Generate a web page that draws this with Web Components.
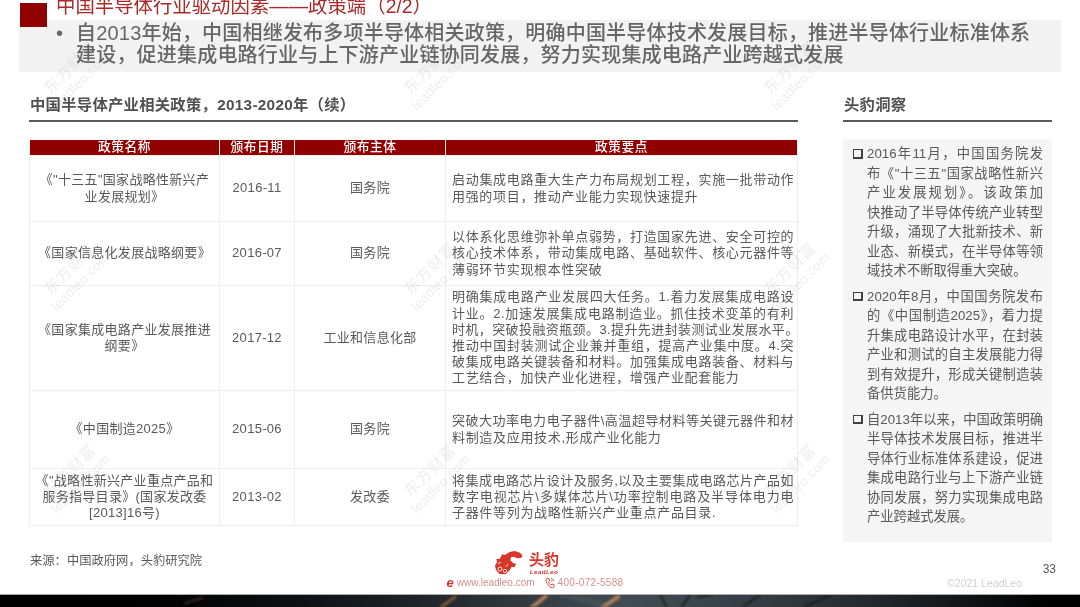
<!DOCTYPE html>
<html lang="zh"><head><meta charset="utf-8">
<style>
html,body{margin:0;padding:0;background:#fff;width:1080px;height:607px;overflow:hidden;font-family:"Liberation Sans","Noto Sans CJK SC",sans-serif}
</style></head><body>
<lead-slide>
  <lead-header slot="header" title="中国半导体行业驱动因素——政策端（2/2）">
    <div>自2013年始，中国相继发布多项半导体相关政策，明确中国半导体技术发展目标，推进半导体行业标准体系</div>
    <div>建设，促进集成电路行业与上下游产业链协同发展，努力实现集成电路产业跨越式发展</div>
  </lead-header>
  <lead-section slot="left" heading="中国半导体产业相关政策，2013-2020年（续）" style="width:769px"><policy-table></policy-table></lead-section>
  <lead-section slot="right" heading="头豹洞察" style="width:209px"><insight-panel></insight-panel></lead-section>
  <lead-footer slot="footer"></lead-footer>
</lead-slide>
<script>
const FONT='"Liberation Sans","Noto Sans CJK SC",sans-serif';
function shadow(el,html){el.attachShadow({mode:'open'}).innerHTML=html;}

customElements.define('lead-mark',class extends HTMLElement{connectedCallback(){
 shadow(this,`<style>:host{display:block;position:absolute;width:70px;height:60px;pointer-events:none;z-index:3}
 div{position:absolute;transform-origin:left bottom;transform:rotate(-45deg);white-space:nowrap;color:#000;opacity:.075}
 .a{left:9px;top:36px;font:15.5px/15px ${FONT};letter-spacing:1px}.b{left:16px;top:53px;font:13.5px/15px ${FONT};letter-spacing:.3px}</style>
 <div class="a">东方财富</div><div class="b">leadleo.com</div>`);
}});

customElements.define('lead-slide',class extends HTMLElement{connectedCallback(){
 const marks=[[43,95],[403,95],[763,95],[43,296],[403,296],[763,296],[43,498],[403,498],[763,498]];
 shadow(this,`<style>
 :host{display:flex;flex-direction:column;width:1080px;height:607px;position:relative;overflow:hidden;filter:blur(.4px)}
 .main{display:flex;gap:45px;padding:16px 0 0 29px;align-items:flex-start}
 </style>
 <slot name="header"></slot>
 <div class="main"><slot name="left"></slot><slot name="right"></slot></div>
 <slot name="footer"></slot>
 ${marks.map(m=>`<lead-mark style="left:${m[0]}px;top:${m[1]-50}px"></lead-mark>`).join('')}`);
}});

customElements.define('lead-header',class extends HTMLElement{connectedCallback(){
 shadow(this,`<style>
 :host{display:grid;grid-template-columns:19px 1px 27px 9px 1fr 19px;grid-template-rows:3px 17px 52px;height:72px;flex:none;color:#666}
 .band{grid-column:2/6;grid-row:3;background:#f2f2f2}
 .sq{grid-column:3;grid-row:2/4;height:24px;background:#900000;z-index:1}
 h1{grid-column:5;grid-row:1/3;margin:-6px 0 0;font:400 19.4px/24px ${FONT};color:#a82a2a;white-space:nowrap;align-self:start}
 .body{grid-column:5;grid-row:3;display:grid;grid-template-columns:20px 1fr;font:500 20px/22px ${FONT};letter-spacing:.2px;padding-top:2px;white-space:nowrap;z-index:1}
 </style>
 <div class="band"></div><div class="sq"></div>
 <h1>${this.getAttribute('title')}</h1>
 <div class="body"><span>•</span><span><slot></slot></span></div>`);
}});

customElements.define('lead-section',class extends HTMLElement{connectedCallback(){
 shadow(this,`<style>
 :host{display:block;flex:none}
 h2{margin:0;height:34px;box-sizing:border-box;border-bottom:2px solid #595959;font:700 15.3px/34px ${FONT};color:#505050;letter-spacing:.3px;padding-left:1px;white-space:nowrap}
 .c{padding-top:18px}
 </style><h2>${this.getAttribute('heading')}</h2><div class="c"><slot></slot></div>`);
}});

customElements.define('policy-table',class extends HTMLElement{connectedCallback(){
 const rows=[
 [65,['《"十三五"国家战略性新兴产','业发展规划》'],'2016-11','国务院',['启动集成电路重大生产力布局规划工程，实施一批带动作','用强的项目，推动产业能力实现快速提升']],
 [63,['《国家信息化发展战略纲要》'],'2016-07','国务院',['以体系化思维弥补单点弱势，打造国家先进、安全可控的','核心技术体系，带动集成电路、基础软件、核心元器件等','薄弱环节实现根本性突破']],
 [104,['《国家集成电路产业发展推进','纲要》'],'2017-12','工业和信息化部',['明确集成电路产业发展四大任务。1.着力发展集成电路设','计业。2.加速发展集成电路制造业。抓住技术变革的有利','时机，突破投融资瓶颈。3.提升先进封装测试业发展水平。','推动中国封装测试企业兼并重组，提高产业集中度。4.突','破集成电路关键装备和材料。加强集成电路装备、材料与','工艺结合，加快产业化进程，增强产业配套能力']],
 [77,['《中国制造2025》'],'2015-06','国务院',['突破大功率电力电子器件\\高温超导材料等关键元器件和材','料制造及应用技术,形成产业化能力']],
 [56,['《"战略性新兴产业重点产品和','服务指导目录》(国家发改委','[2013]16号)'],'2013-02','发改委',['将集成电路芯片设计及服务,以及主要集成电路芯片产品如','数字电视芯片\\多媒体芯片\\功率控制电路及半导体电力电','子器件等列为战略性新兴产业重点产品目录.']]];
 const L=a=>a.map(s=>`<div>${s}</div>`).join('');
 shadow(this,`<style>
 :host{display:grid;grid-template-columns:189px 74px 150px 351px;gap:1px;grid-template-rows:15px ${rows.map(r=>r[0]+'px').join(' ')};
   background:#eee;border:solid #eee;border-width:0 1px 1px 1px;width:769px;box-sizing:border-box;font:13px/16.2px ${FONT};color:#595959;white-space:nowrap}
 .th{background:#900000;color:#fff;text-align:center;line-height:15px;font-weight:500;font-size:12.7px;letter-spacing:.6px}
 .td{background:#fff;display:flex;flex-direction:column;justify-content:center;align-items:center;text-align:center;letter-spacing:.3px}
 .td.p{align-items:stretch;text-align:left;padding:0 3px 0 6px;letter-spacing:.4px}
 .td.p div{text-align:justify;text-align-last:justify}
 .td.p div:last-child{text-align-last:left;letter-spacing:.68px}
 </style>
 <div class="th">政策名称</div><div class="th">颁布日期</div><div class="th">颁布主体</div><div class="th">政策要点</div>
 ${rows.map(r=>`<div class="td">${L(r[1])}</div><div class="td">${r[2]}</div><div class="td">${r[3]}</div><div class="td p">${L(r[4])}</div>`).join('')}`);
}});

customElements.define('insight-panel',class extends HTMLElement{connectedCallback(){
 const ps=[['2016年11月，中国国务院发','布《"十三五"国家战略性新兴','产业发展规划》。该政策加','快推动了半导体传统产业转型','升级，涌现了大批新技术、新','业态、新模式，在半导体等领','域技术不断取得重大突破。'],
 ['2020年8月，中国国务院发布','的《中国制造2025》，着力提','升集成电路设计水平，在封装','产业和测试的自主发展能力得','到有效提升，形成关键制造装','备供货能力。'],
 ['自2013年以来，中国政策明确','半导体技术发展目标，推进半','导体行业标准体系建设，促进','集成电路行业与上下游产业链','协同发展，努力实现集成电路','产业跨越式发展。']];
 shadow(this,`<style>
 :host{display:flex;flex-direction:column;gap:6px;width:209px;height:403px;box-sizing:border-box;margin-top:-1px;padding:5px 9px 0 10px;background:#f5f5f5;font:13.3px/19.5px ${FONT};color:#595959}
 .p{display:grid;grid-template-columns:14px 1fr}
 .b{width:6.500px;height:6.500px;border:1.200px solid #404040;border-right-width:2px;border-bottom-width:2px;margin-top:5px}
 .l{text-align:justify;text-align-last:justify;white-space:nowrap}
 .l:last-child{text-align-last:left}
 </style>${ps.map(p=>`<div class="p"><span class="b"></span><div>${p.map(s=>`<div class="l">${s}</div>`).join('')}</div></div>`).join('')}`);
}});

customElements.define('lead-footer',class extends HTMLElement{connectedCallback(){
 shadow(this,`<style>
 :host{display:block;flex:1;position:relative;min-height:0}
 .wrap{position:absolute;inset:0 0 13px 0;display:grid;grid-template-columns:417px 176px 1fr;padding:0 18px 0 30px}
 .src{font:12.3px/14px ${FONT};color:#595959;margin-top:12px;white-space:nowrap}
 .logo{display:flex;flex-direction:column;align-items:center;margin-top:9px}
 .top{display:flex;align-items:flex-start;gap:6px;color:#d9362a;height:25px;margin-right:16px}
 .brand{display:flex;flex-direction:column;align-items:center;font:700 15px/17px ${FONT}}
 .brand small{font:italic 700 6.2px/8px ${FONT};letter-spacing:.4px}
 .contact{display:flex;gap:10px;font:10px/12px ${FONT};color:#d98f8a;margin-top:1px;white-space:nowrap}
 .contact span{display:flex;align-items:center;gap:3px}
 .e{font:italic 700 13px/12px ${FONT};color:#d9362a}
 .num{letter-spacing:.3px;font-weight:400}
 .r{display:flex;flex-direction:column;align-items:flex-end;padding-top:20px}
 .n{font:12px/14px ${FONT};color:#595959;margin-right:6px}
 .c{font:10.5px/12px ${FONT};color:#cfcfcf;margin:1px 40px 0 0}
 .bar{position:absolute;left:0;right:0;bottom:0;height:13px;border-top:1px solid #aaa;box-sizing:border-box;overflow:hidden;background:linear-gradient(90deg,#000 0,#020202 15%,#0e1114 28%,#20262b 40%,#343d43 50%,#414c52 58%,#39434a 66%,#2c3338 76%,#1c2125 84%,#0a0b0c 93%,#000 97%)}
 .bar svg{display:block;filter:blur(1.2px)}
 </style>
 <div class="wrap">
  <div class="src">来源：中国政府网，头豹研究院</div>
  <div class="logo">
   <div class="top">
    <svg width="28" height="24" viewBox="0 0 84 72"><path fill="#d9362a" d="M22 10 30 12 44 3 58 0 72 4 82 12 80 20 68 22 56 17 48 19 46 28 55 37 64 38 58 49 50 47 44 58 32 70 14 69 3 57 0 44 6 32 4 24 14 24Z"/><g fill="none" stroke="#fff" stroke-width="2.500"><circle cx="15" cy="54" r="6"/><circle cx="30" cy="60" r="5"/><path d="M8 38 18 34M32 46 40 40"/></g></svg>
    <div class="brand">头豹<small>LeadLeo</small></div>
   </div>
   <div class="contact">
    <span><i class="e">e</i>www.leadleo.com</span>
    <span><svg width="10" height="12" viewBox="0 0 10 12" fill="none" stroke="#d9534a" stroke-width="1"><path d="M2 1.500 4 1.500 4.500 4 3.300 5C3.800 6.500 4.800 7.500 6 8.100L7 7 9 7.700 9 10C9 10.500 8 11 7 10.700 4 10 1 6.500 1 2.500 1 2 1.500 1.500 2 1.500Z"/><path d="M6 1.500C7.500 1.700 8.300 2.500 8.500 4M6 3.500C6.500 3.600 6.900 4 7 4.500"/></svg><b class="num">400-072-5588</b></span>
   </div>
  </div>
  <div class="r"><div class="n">33</div><div class="c">©2021 LeadLeo</div></div>
 </div>
 <div class="bar"><svg width="1080" height="12" viewBox="0 0 1080 12" fill="none" stroke-linecap="round">
   <g opacity=".8"><path d="M185 8 203 3" stroke="#4a3020" stroke-width="2"/><path d="M441 12 455 2" stroke="#9a6236" stroke-width="3"/><path d="M530 14 546 1" stroke="#d08a5c" stroke-width="4"/><path d="M600 14 618 2" stroke="#c98a5e" stroke-width="4"/></g>
   <g stroke="#14181b" stroke-width="1.500"><path d="M660 0 668 14M690 0 680 14M698 2 712 0M760 0 740 14M830 0 800 14M345 2 350 12"/></g>
   <g stroke="#596369" stroke-width="1"><path d="M560 1 600 10M572 1 606 8"/></g>
 </svg></div>`);
}});
</script>
</body></html>
